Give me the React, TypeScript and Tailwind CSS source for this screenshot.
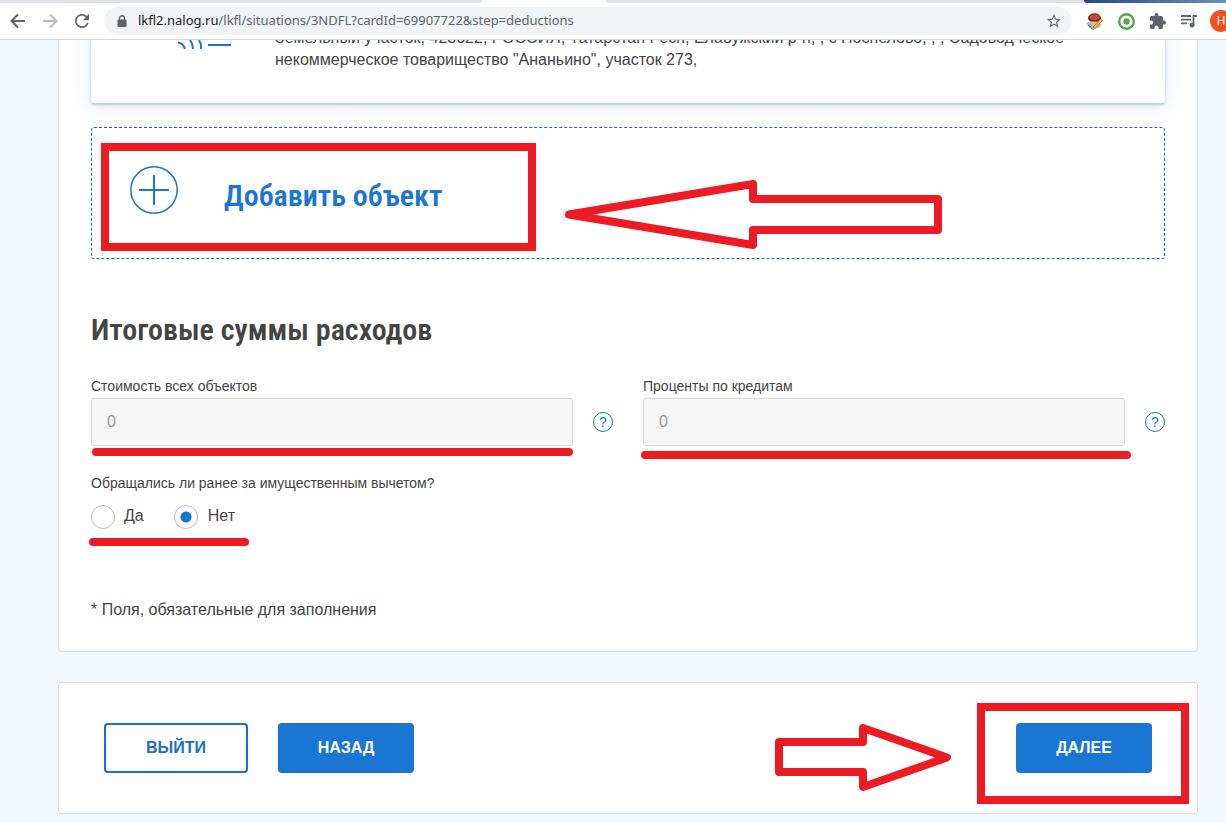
import { useState } from "react";

type AmountFieldProps = {
  id: string;
  label: string;
  markClass: string;
};

function BackIcon({ className }: { className: string }) {
  return (
    <svg viewBox="0 0 16 16" className={className} fill="none" stroke="currentColor" strokeWidth="2">
      <path d="M15 8H2M8 1.5L1.5 8L8 14.5" />
    </svg>
  );
}

function ReloadIcon() {
  return (
    <svg viewBox="4 4 16 16" className="size-[14px] text-[#5f6368]" fill="currentColor">
      <path d="M17.65 6.35A7.95 7.95 0 0 0 12 4a8 8 0 1 0 7.73 10h-2.08A6 6 0 1 1 12 6c1.66 0 3.14.69 4.22 1.78L13 11h7V4l-2.35 2.35z" />
    </svg>
  );
}

function LockIcon() {
  return (
    <svg viewBox="0 0 10 12" className="h-3 w-[10px] shrink-0 text-[#5f6368]">
      <rect x="0.5" y="4.5" width="9" height="7.5" rx="1" fill="currentColor" />
      <path d="M2.5 5V3.2a2.5 2.5 0 0 1 5 0V5" fill="none" stroke="currentColor" strokeWidth="1.4" />
    </svg>
  );
}

function StarIcon() {
  return (
    <svg viewBox="2 2 20 20" className="size-[14px] text-[#5f6368]" fill="currentColor">
      <path d="M22 9.24l-7.19-.62L12 2 9.19 8.63 2 9.24l5.46 4.73L5.82 21 12 17.27 18.18 21l-1.63-7.03L22 9.24zM12 15.4l-3.76 2.27 1-4.28-3.32-2.88 4.38-.38L12 6.1l1.71 4.04 4.38.38-3.32 2.88 1 4.28L12 15.4z" />
    </svg>
  );
}

function MascotIcon() {
  return (
    <svg viewBox="0 0 17 17" className="size-[17px]">
      <path d="M0.5 10l4-1 2 3 2 4-5-1z" fill="#9db4c4" />
      <path d="M6 10l5-1 5 2-3 4-6 1z" fill="#b8c4c8" />
      <ellipse cx="8.5" cy="5" rx="6.5" ry="4.7" fill="#7d2418" />
      <ellipse cx="8.5" cy="4.2" rx="5" ry="3" fill="#c04a34" />
      <path d="M4.500 8.500h8l-2 3H6z" fill="#e8b48a" />
      <path d="M7 14l7.5-8 1.8 1.5L9 15.500z" fill="#f0c530" stroke="#6b4a1b" strokeWidth="0.6" />
      <path d="M2 12l3 2M5 15.500l3 1" stroke="#39506b" strokeWidth="0.8" />
    </svg>
  );
}

function TargetIcon() {
  return (
    <svg viewBox="0 0 17 17" className="size-[17px]">
      <circle cx="8.5" cy="8.5" r="7.3" fill="#fff" stroke="#54a452" strokeWidth="2.4" />
      <circle cx="8.5" cy="8.5" r="3.2" fill="#54a452" />
    </svg>
  );
}

function PuzzleIcon() {
  return (
    <svg viewBox="2 1 21 21" className="size-4 text-[#5f6368]" fill="currentColor">
      <path d="M20.5 11H19V7c0-1.1-.9-2-2-2h-4V3.5a2.5 2.5 0 0 0-5 0V5H4c-1.1 0-1.99.9-1.99 2v3.8H3.5c1.49 0 2.7 1.21 2.7 2.7s-1.21 2.7-2.7 2.7H2V20c0 1.1.9 2 2 2h3.8v-1.5c0-1.49 1.21-2.7 2.7-2.7s2.7 1.21 2.7 2.7V22H17c1.1 0 2-.9 2-2v-4h1.5a2.5 2.5 0 0 0 0-5z" />
    </svg>
  );
}

function PlaylistIcon() {
  return (
    <svg viewBox="0 0 16 13" className="h-[13px] w-4 text-[#5f6368]">
      <path d="M0 1h10M0 4.7h10M0 8.4h6M12.5 10V1H16" fill="none" stroke="currentColor" strokeWidth="1.8" />
      <circle cx="11" cy="10.2" r="2.4" fill="currentColor" />
    </svg>
  );
}

function BrowserBar() {
  return (
    <header className="relative z-10 border-b border-[#d5d8dc] bg-white">
      <div className="flex h-[3px]">
        <div className="w-[482px] rounded-br-lg bg-[#dee1e6]" />
        <div className="w-[124px]" />
        <div className="flex-1 rounded-bl-lg bg-[#dee1e6]" />
        <div className="w-[142px] bg-[#dee1e6]">
          <div className="h-full rounded-bl-lg bg-linear-to-r from-[#274a80] to-[#6f8fb8]" />
        </div>
      </div>
      <div className="flex h-9 items-center overflow-hidden pl-[10px]">
        <button aria-label="Назад" className="text-[#5f6368]">
          <BackIcon className="size-4" />
        </button>
        <button aria-label="Вперёд" className="ml-4 text-[#babcbe]">
          <BackIcon className="size-4 rotate-180" />
        </button>
        <button aria-label="Обновить" className="ml-[17px]">
          <ReloadIcon />
        </button>
        <div className="ml-[15px] flex h-7 min-w-0 flex-1 items-center rounded-full bg-[#f1f3f4] pr-[11px] pl-[13px]">
          <LockIcon />
          <p className="ml-[11px] flex-1 truncate font-['Noto_Sans','Open_Sans',sans-serif] text-[13px] text-[#5f6368]">
            <span className="text-[#202124]">lkfl2.nalog.ru</span>
            /lkfl/situations/3NDFL?cardId=69907722&amp;step=deductions
          </p>
          <button aria-label="В закладки">
            <StarIcon />
          </button>
        </div>
        <div className="ml-[14px] flex items-center gap-[15px]">
          <MascotIcon />
          <TargetIcon />
          <PuzzleIcon />
          <PlaylistIcon />
        </div>
        <div className="ml-[13px] w-4 overflow-hidden">
          <div className="flex size-[22px] items-center justify-center rounded-full bg-[#f4511e] font-['Roboto',sans-serif] text-xs text-white">
            H
          </div>
        </div>
      </div>
    </header>
  );
}

function AmountField({ id, label, markClass }: AmountFieldProps) {
  return (
    <div>
      <label htmlFor={id} className="block text-sm leading-5">
        {label}
      </label>
      <div className="mt-0.5 flex items-center gap-5">
        <div className="relative min-w-0 flex-1">
          <input
            id={id}
            type="text"
            defaultValue="0"
            disabled
            className="block h-12 w-full rounded-[3px] border border-[#dcdcdc] bg-[#f6f6f6] px-[15px] text-base text-[#9b9b9b]"
          />
          <div className={markClass} />
        </div>
        <button
          aria-label="Подсказка"
          className="flex size-5 items-center justify-center rounded-full border border-[#1976d2] text-sm leading-none text-[#1976d2]"
        >
          ?
        </button>
      </div>
    </div>
  );
}

const radioClass =
  "size-6 appearance-none rounded-full border border-[#b9bcc4] bg-white checked:bg-[radial-gradient(circle,#1976d2_5px,transparent_6px)]";

export default function App() {
  const [appliedBefore, setAppliedBefore] = useState("no");

  return (
    <div className="flex h-screen flex-col overflow-hidden bg-[#f3f8fc] font-['Liberation_Sans',Arial,sans-serif] text-[#444]">
      <BrowserBar />
      <main className="min-h-0 flex-1 overflow-hidden pr-7 pl-[58px]">
        <section className="-mt-[13px] rounded-b-[4px] border border-t-0 border-[#dcdfe2] bg-white px-8 pb-[30px]">
          <article className="flex rounded-b-[3px] bg-white pb-8 pl-[85px] shadow-[0_2px_3px_rgba(100,130,165,0.4),0_0_20px_rgba(70,120,210,0.18)]">
            <svg viewBox="0 0 56 22" className="h-[22px] w-14 shrink-0" fill="none" stroke="#1976d2" strokeWidth="2">
              <path d="M2 15.500q5 .5 7 6.500M14 13q3 4 3 9M23 13q2.500 4 2 9M32 18h23" />
            </svg>
            <p className="ml-[43px] text-base leading-[22px]">
              Земельный участок, 423622, РОССИЯ, Татарстан Респ, Елабужский р-н, , с Поспелово, , , Садоводческое
              <br />
              некоммерческое товарищество "Ананьино", участок 273,
            </p>
          </article>

          <div className="relative mt-6 h-[132px] rounded-[3px] border border-dashed border-[#1f6ab3] px-[38px] pt-[38px]">
            <button className="flex items-center text-[#1976d2]">
              <svg viewBox="0 0 48 48" className="size-12" fill="none" stroke="currentColor">
                <circle cx="24" cy="24" r="23.200" strokeWidth="1.500" />
                <path d="M24 9v30M9 24h30" strokeWidth="2" />
              </svg>
              <span className="ml-[46px] pt-3 font-['Roboto_Condensed','Liberation_Sans_Narrow','Roboto',sans-serif] text-3xl leading-9 font-semibold">
                Добавить объект
              </span>
            </button>
            <div className="pointer-events-none absolute top-[15px] left-[9px] h-[108px] w-[435px] border-8 border-[#ed1c24]" />
            <svg
              viewBox="0 0 380 72"
              className="pointer-events-none absolute top-[51px] left-[472px] h-[72px] w-[380px]"
              fill="none"
              stroke="#ed1c24"
              strokeWidth="8"
              strokeLinejoin="round"
            >
              <path d="M5 35.500L189 5V20H374V51H189V66Z" />
            </svg>
          </div>

          <h2 className="mt-[53px] font-['Roboto_Condensed','Liberation_Sans_Narrow','Roboto',sans-serif] text-3xl leading-9 font-semibold">
            Итоговые суммы расходов
          </h2>

          <div className="mt-7 grid grid-cols-2 gap-[30px]">
            <AmountField
              id="objects-cost"
              label="Стоимость всех объектов"
              markClass="absolute top-[50px] left-px right-0 h-2 rounded-full bg-[#ed1c24]"
            />
            <AmountField
              id="loan-interest"
              label="Проценты по кредитам"
              markClass="absolute top-[53px] -left-0.5 -right-1.5 h-2 rounded-full bg-[#ed1c24]"
            />
          </div>

          <fieldset className="mt-[27px]">
            <legend className="text-sm leading-5">Обращались ли ранее за имущественным вычетом?</legend>
            <div className="relative mt-3 flex gap-[30px] text-base">
              <label className="flex items-center gap-[9px]">
                <input
                  type="radio"
                  name="applied"
                  className={radioClass}
                  checked={appliedBefore === "yes"}
                  onChange={() => setAppliedBefore("yes")}
                />
                <span className="pb-0.5 leading-5">Да</span>
              </label>
              <label className="flex items-center gap-[10px]">
                <input
                  type="radio"
                  name="applied"
                  className={radioClass}
                  checked={appliedBefore === "no"}
                  onChange={() => setAppliedBefore("no")}
                />
                <span className="pb-0.5 leading-5">Нет</span>
              </label>
              <div className="absolute top-[33px] -left-0.5 h-2 w-40 rounded-full bg-[#ed1c24]" />
            </div>
          </fieldset>

          <p className="mt-[70px] text-base leading-[22px]">* Поля, обязательные для заполнения</p>
        </section>

        <section className="relative mt-[30px] flex items-center rounded-[4px] border border-[#dcdfe2] bg-white px-[45px] py-10">
          <button className="h-[50px] w-36 rounded-[4px] border-2 border-[#1f6fc0] text-base font-bold text-[#1f6fc0]">
            ВЫЙТИ
          </button>
          <button className="ml-[30px] h-[50px] w-[136px] rounded-[4px] bg-[#1976d2] text-base font-bold text-white">
            НАЗАД
          </button>
          <button className="ml-auto h-[50px] w-[136px] rounded-[4px] bg-[#1976d2] text-base font-bold text-white">
            ДАЛЕЕ
          </button>
          <svg
            viewBox="0 0 180 72"
            className="pointer-events-none absolute top-[39px] right-[244px] h-[72px] w-[180px]"
            fill="none"
            stroke="#ed1c24"
            strokeWidth="8"
            strokeLinejoin="round"
          >
            <path d="M6 20H90V6L174 35.500L90 65V50H6Z" />
          </svg>
          <div className="pointer-events-none absolute top-5 right-2 h-[101px] w-[212px] border-8 border-[#ed1c24]" />
        </section>
      </main>
    </div>
  );
}
